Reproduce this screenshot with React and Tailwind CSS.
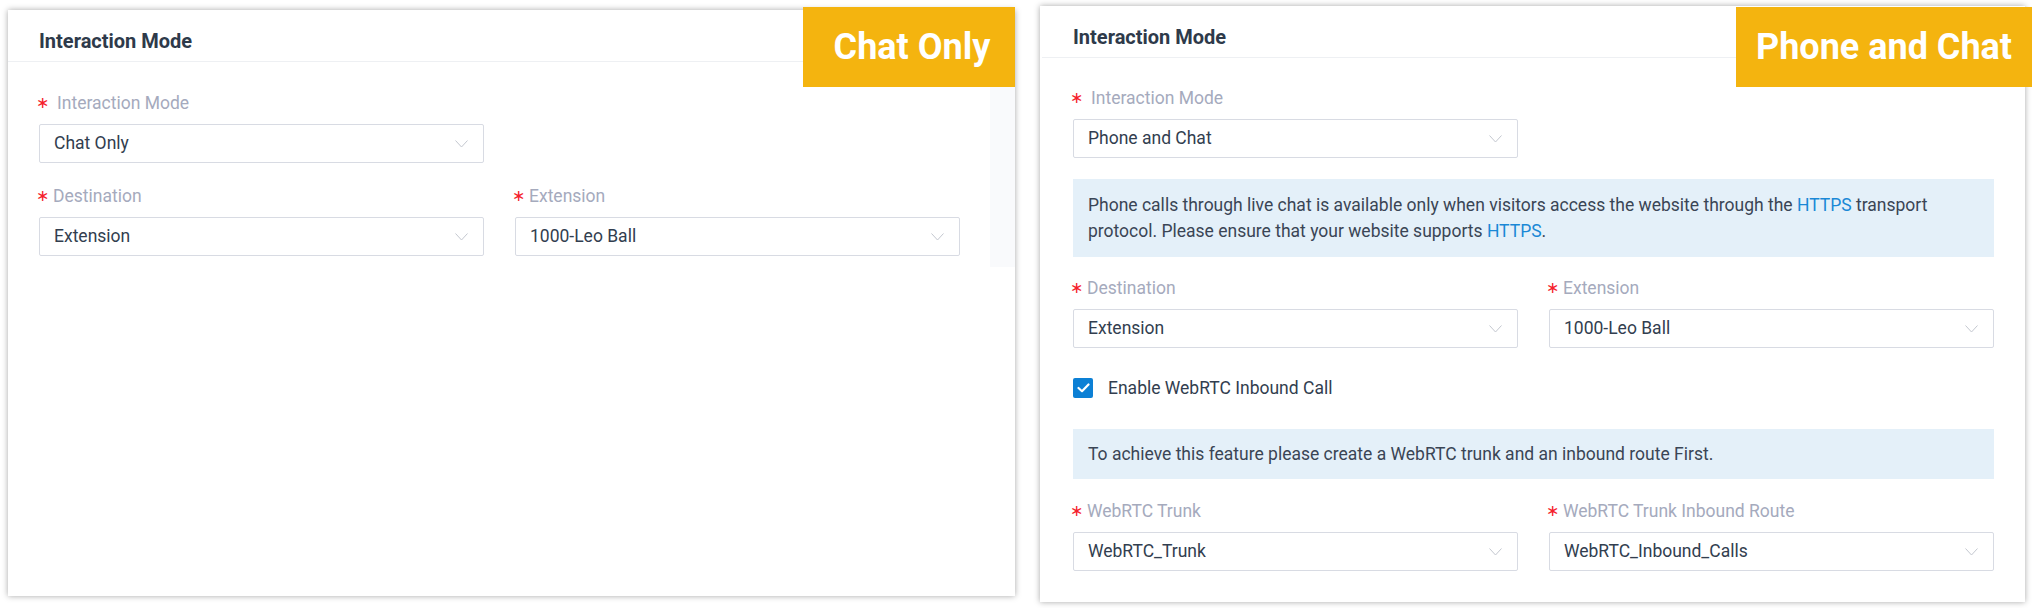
import React from "react";

const Chevron = () => (
  <svg width="13" height="8" viewBox="0 0 13 8" fill="none" className="shrink-0">
    <path d="M0.5 0.5 L6.5 7 L12.5 0.5" stroke="#c3c7cf" strokeWidth="1" />
  </svg>
);

function Select({ value }) {
  return (
    <div className="flex h-[39px] items-center justify-between rounded-[2px] border border-[#d8dbe3] bg-white pl-[14px] pr-[15px] text-[17.5px] text-[#323e4f]">
      <span>{value}</span>
      <Chevron />
    </div>
  );
}

function Label({ children, wide }) {
  return (
    <div className="flex h-[26px] items-center text-[17.5px] leading-[26px] text-[#a5aabd]">
      <span
        className={
          wide
            ? "-ml-[3px] inline-block w-[21px] font-['DejaVu_Sans'] text-[16px] text-[#f5222d]"
            : "-ml-[3px] inline-block w-[17px] font-['DejaVu_Sans'] text-[16px] text-[#f5222d]"
        }
      >
        ∗
      </span>
      {children}
    </div>
  );
}

function Field({ label, value, wide }) {
  return (
    <div className="flex flex-col">
      <Label wide={wide}>{label}</Label>
      <div className="mt-[8px]">
        <Select value={value} />
      </div>
    </div>
  );
}

function Header() {
  return (
    <div className="h-[52px] border-b border-[#eef0f3] pl-[31px] pt-[19px]">
      <div className="text-[20px] font-bold leading-[24px] text-[#2e3a4a]">Interaction Mode</div>
    </div>
  );
}

const Link = ({ children }) => <span className="text-[#1a88d6]">{children}</span>;

export default function App() {
  return (
    <div className="flex h-[608px] w-[2034px] items-start gap-[25px] bg-white pl-[8px] font-['Roboto',sans-serif]">
      {/* Left panel */}
      <div className="relative mt-[10px] h-[586px] w-[1007px] bg-white shadow-[0_0_6px_rgba(0,0,0,0.35)]">
        <div className="flex">
          <div className="h-[257px] w-[982px]">
            <Header />
            <div className="pl-[31px] pr-[30px] pt-[28px]">
              <div className="w-[445px]">
                <Field label="Interaction Mode" value="Chat Only" wide />
              </div>
              <div className="mt-[20px] grid grid-cols-2 gap-x-[31px]">
                <Field label="Destination" value="Extension" />
                <Field label="Extension" value="1000-Leo Ball" />
              </div>
            </div>
          </div>
          <div className="h-[257px] flex-1 bg-[#f9fafc]" />
        </div>
        <div className="absolute -top-[3px] right-0 flex h-[80px] w-[212px] items-center justify-center bg-[#f4b40f] pl-[6px] text-[36px] font-bold text-white">
          Chat Only
        </div>
      </div>

      {/* Right panel */}
      <div className="relative mt-[6px] h-[596px] w-[985px] bg-white shadow-[0_0_6px_rgba(0,0,0,0.35)]">
        <div className="pl-[2px]">
          <Header />
        </div>
        <div className="pl-[33px] pr-[31px] pt-[27px]">
          <div className="w-[445px]">
            <Field label="Interaction Mode" value="Phone and Chat" wide />
          </div>
          <div className="mt-[21px] bg-[#e4f0f9] px-[15px] py-[13px] text-[17.5px] leading-[26px] text-[#3a4555]">
            Phone calls through live chat is available only when visitors access the website through the{" "}
            <Link>HTTPS</Link> transport protocol. Please ensure that your website supports <Link>HTTPS</Link>.
          </div>
          <div className="mt-[18px] grid grid-cols-2 gap-x-[31px]">
            <Field label="Destination" value="Extension" />
            <Field label="Extension" value="1000-Leo Ball" />
          </div>
          <div className="mt-[27px] flex h-[26px] items-center">
            <div className="flex h-[20px] w-[20px] items-center justify-center rounded-[2px] bg-[#0c80d5]">
              <svg width="13" height="10" viewBox="0 0 13 10" fill="none">
                <path d="M1.5 5 L5 8.2 L11.5 1.5" stroke="white" strokeWidth="2.2" strokeLinecap="round" strokeLinejoin="round" />
              </svg>
            </div>
            <span className="ml-[15px] text-[17.5px] text-[#323e4f]">Enable WebRTC Inbound Call</span>
          </div>
          <div className="mt-[28px] bg-[#e4f0f9] px-[15px] py-[12px] text-[17.5px] leading-[26px] text-[#3a4555]">
            To achieve this feature please create a WebRTC trunk and an inbound route First.
          </div>
          <div className="mt-[19px] grid grid-cols-2 gap-x-[31px]">
            <Field label="WebRTC Trunk" value="WebRTC_Trunk" />
            <Field label="WebRTC Trunk Inbound Route" value="WebRTC_Inbound_Calls" />
          </div>
        </div>
        <div className="absolute -right-[7px] top-[1px] flex h-[80px] w-[296px] items-center justify-center bg-[#f4b40f] text-[36px] font-bold text-white">
          Phone and Chat
        </div>
      </div>
    </div>
  );
}
